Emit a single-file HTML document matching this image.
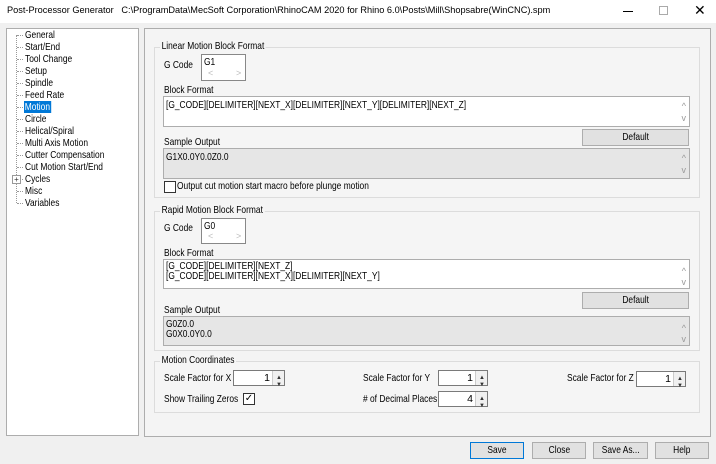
<!DOCTYPE html>
<html><head><style>
*{box-sizing:border-box;margin:0;padding:0}
body{width:716px;height:464px;background:#f0f0f0;font-family:"Liberation Sans",sans-serif;font-size:10.5px;color:#000;position:relative;overflow:hidden}
.a{position:absolute;white-space:nowrap}
.t{transform:scaleX(.8);transform-origin:0 0}
.box{position:absolute;border:1px solid #adadad;background:#fff}
.grp{position:absolute;border:1px solid #dcdcdc;background:#f5f5f5}
.gt{position:absolute;background:#f5f5f5;padding:0 2px;white-space:nowrap;transform:scaleX(.8);transform-origin:0 0}
.gray{background:#e6e6e6}
.btn{position:absolute;border:1px solid #adadad;background:#e1e1e1;text-align:center;line-height:15px}
.btn span{display:inline-block;transform:scaleX(.8)}
.sb{position:absolute;right:3px;color:#999;font-size:9px;line-height:10px}
.spin{position:absolute;border:1px solid #7a7a7a;background:#fff;height:16px;text-align:right;padding-right:14px;line-height:14px}
.spin:after{content:"";position:absolute;right:0;top:0;width:11px;height:14px;border-left:1px solid #ccc;background:#f0f0f0}
.spin i{position:absolute;right:2px;font-style:normal;font-size:6px;z-index:2;color:#333}
.cb{position:absolute;width:12px;height:12px;border:1px solid #333;background:#fff}
.tree div{height:12px;line-height:12px;padding-left:18px;position:relative}
.tree div span{display:inline-block;transform:scaleX(.8);transform-origin:0 0}
.tree div:before{content:"";position:absolute;left:10px;top:6px;width:6px;border-top:1px dotted #999}
</style></head><body>
<div class="a" style="left:0;top:0;width:716px;height:23px;background:#fff"></div>
<div class="a" style="left:7px;top:5px;font-size:9.2px">Post-Processor Generator&nbsp;&nbsp; C:\ProgramData\MecSoft Corporation\RhinoCAM 2020 for Rhino 6.0\Posts\Mill\Shopsabre(WinCNC).spm</div>
<div class="a" style="left:623px;top:11px;width:10px;height:1px;background:#000"></div>
<div class="a" style="left:659px;top:6px;width:9px;height:9px;border:1px solid #aaa"></div>
<div class="a" style="left:694px;top:2px;font-size:14px">✕</div>
<div class="box" style="left:6px;top:28px;width:133px;height:408px"></div>
<div class="a" style="left:16px;top:35px;width:1px;height:168px;border-left:1px dotted #999"></div>
<div class="tree a" style="left:7px;top:29px;width:130px">
<div><span>General</span></div><div><span>Start/End</span></div><div><span>Tool Change</span></div><div><span>Setup</span></div><div><span>Spindle</span></div><div><span>Feed Rate</span></div>
<div><span style="background:#0078d7;color:#fff;padding:0 1px;margin-left:-1px">Motion</span></div>
<div><span>Circle</span></div><div><span>Helical/Spiral</span></div><div><span>Multi Axis Motion</span></div><div><span>Cutter Compensation</span></div><div><span>Cut Motion Start/End</span></div><div><span>Cycles</span></div><div><span>Misc</span></div><div><span>Variables</span></div>
</div>
<div class="a" style="left:12px;top:175px;width:9px;height:9px;border:1px solid #999;background:#fff;font-size:8px;line-height:7px;text-align:center;color:#333">+</div>
<div class="box" style="left:144px;top:28px;width:567px;height:409px;background:#f4f4f4"></div>

<div class="grp" style="left:154px;top:47px;width:546px;height:151px"></div>
<div class="gt" style="left:160px;top:40px">Linear Motion Block Format</div>
<div class="a t" style="left:164px;top:59px">G Code</div>
<div class="box" style="left:201px;top:54px;width:45px;height:27px;border-color:#888"><span class="a t" style="left:2px;top:1px">G1</span><span class="a" style="left:6px;top:13px;color:#bbb;font-size:9px">&lt;</span><span class="a" style="left:34px;top:13px;color:#bbb;font-size:9px">&gt;</span></div>
<div class="a t" style="left:164px;top:84px">Block Format</div>
<div class="box" style="left:163px;top:96px;width:527px;height:31px"><span class="a t" style="left:2px;top:2px">[G_CODE][DELIMITER][NEXT_X][DELIMITER][NEXT_Y][DELIMITER][NEXT_Z]</span><span class="sb" style="top:4px">^</span><span class="sb" style="top:16px">v</span></div>
<div class="btn" style="left:582px;top:129px;width:107px;height:17px"><span>Default</span></div>
<div class="a t" style="left:164px;top:136px">Sample Output</div>
<div class="box gray" style="left:163px;top:148px;width:527px;height:31px"><span class="a t" style="left:2px;top:2px">G1X0.0Y0.0Z0.0</span><span class="sb" style="top:4px">^</span><span class="sb" style="top:16px">v</span></div>
<div class="cb" style="left:164px;top:181px"></div>
<div class="a t" style="left:177px;top:180px">Output cut motion start macro before plunge motion</div>

<div class="grp" style="left:154px;top:211px;width:546px;height:140px"></div>
<div class="gt" style="left:160px;top:204px">Rapid Motion Block Format</div>
<div class="a t" style="left:164px;top:222px">G Code</div>
<div class="box" style="left:201px;top:218px;width:45px;height:26px;border-color:#888"><span class="a t" style="left:2px;top:1px">G0</span><span class="a" style="left:6px;top:12px;color:#bbb;font-size:9px">&lt;</span><span class="a" style="left:34px;top:12px;color:#bbb;font-size:9px">&gt;</span></div>
<div class="a t" style="left:164px;top:247px">Block Format</div>
<div class="box" style="left:163px;top:259px;width:527px;height:30px"><span class="a t" style="left:2px;top:1px;line-height:10px">[G_CODE][DELIMITER][NEXT_Z]<br>[G_CODE][DELIMITER][NEXT_X][DELIMITER][NEXT_Y]</span><span class="sb" style="top:6px">^</span><span class="sb" style="top:17px">v</span></div>
<div class="btn" style="left:582px;top:292px;width:107px;height:17px"><span>Default</span></div>
<div class="a t" style="left:164px;top:304px">Sample Output</div>
<div class="box gray" style="left:163px;top:316px;width:527px;height:30px"><span class="a t" style="left:2px;top:2px;line-height:10px">G0Z0.0<br>G0X0.0Y0.0</span><span class="sb" style="top:6px">^</span><span class="sb" style="top:17px">v</span></div>

<div class="grp" style="left:154px;top:361px;width:546px;height:52px"></div>
<div class="gt" style="left:160px;top:354px">Motion Coordinates</div>
<div class="a t" style="left:164px;top:372px">Scale Factor for X</div>
<div class="spin" style="left:233px;top:370px;width:52px">1<i style="top:0">▲</i><i style="top:7px">▼</i></div>
<div class="a t" style="left:363px;top:372px">Scale Factor for Y</div>
<div class="spin" style="left:438px;top:370px;width:50px">1<i style="top:0">▲</i><i style="top:7px">▼</i></div>
<div class="a t" style="left:567px;top:372px">Scale Factor for Z</div>
<div class="spin" style="left:636px;top:371px;width:50px">1<i style="top:0">▲</i><i style="top:7px">▼</i></div>
<div class="a t" style="left:164px;top:393px">Show Trailing Zeros</div>
<div class="cb" style="left:243px;top:393px;font-size:10px;line-height:10px;text-align:center">✓</div>
<div class="a t" style="left:363px;top:393px"># of Decimal Places</div>
<div class="spin" style="left:438px;top:391px;width:50px">4<i style="top:0">▲</i><i style="top:7px">▼</i></div>

<div class="btn" style="left:470px;top:442px;width:54px;height:17px;border:1px solid #0078d7"><span>Save</span></div>
<div class="btn" style="left:532px;top:442px;width:54px;height:17px"><span>Close</span></div>
<div class="btn" style="left:593px;top:442px;width:55px;height:17px"><span>Save As...</span></div>
<div class="btn" style="left:655px;top:442px;width:54px;height:17px"><span>Help</span></div>
</body></html>
